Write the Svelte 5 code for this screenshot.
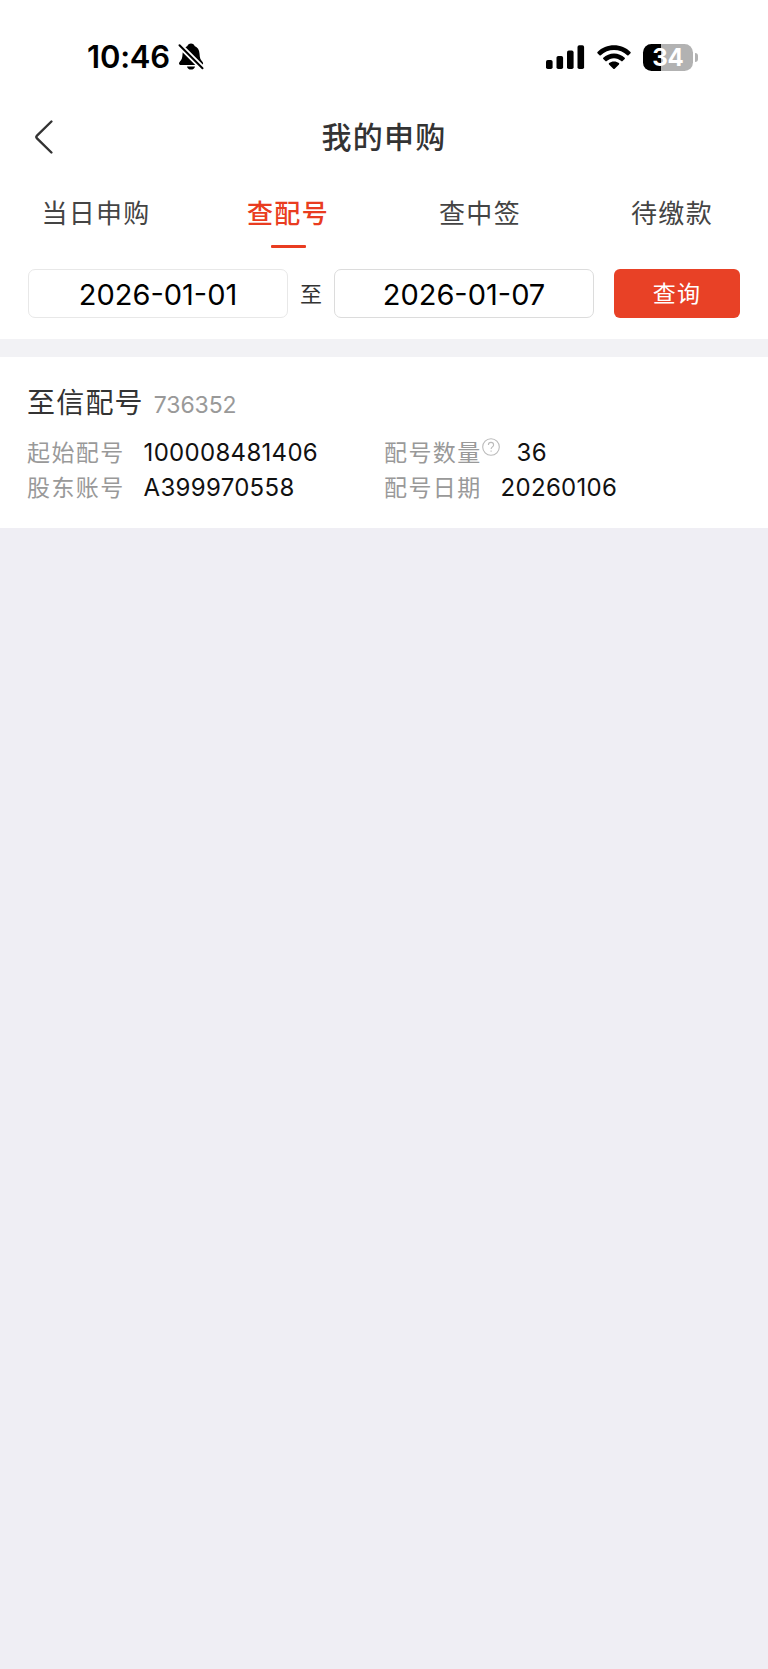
<script>
  const tabs = ['当日申购', '查配号', '查中签', '待缴款'];
  let activeTab = $state(1);
  let startDate = $state('2026-01-01');
  let endDate = $state('2026-01-07');

  const record = {
    name: '至信配号',
    code: '736352',
    startNo: '100008481406',
    account: 'A399970558',
    count: '36',
    date: '20260106'
  };
</script>

<div class="page">
  <div class="status-bar">
    <div class="status-left">
      <span class="clock">10:46</span>
      <svg class="bell" width="26" height="30" viewBox="0 0 26 30">
        <path d="M13 1.500c1.900 0 3.300 1 3.600 2.600 3 1.200 4.700 3.900 4.900 7.400.2 4.300.9 6.200 2.700 8 .7.7.9 1.300.9 1.900 0 1-.7 1.500-1.900 1.500H2.900C1.700 22.900 1 22.300 1 21.400c0-.7.300-1.300 1-2 1.800-1.800 2.400-3.600 2.600-7.900C4.800 8 6.500 5.300 9.400 4.100 9.800 2.500 11.200 1.500 13 1.500z" />
        <path d="M9 24.400h8c-.3 2-1.900 3.200-4 3.200s-3.700-1.200-4-3.200z" />
        <path class="bell-gap" d="M.5 2.200 25 26.700" />
        <path class="bell-slash" d="M1.500 3.200 24.500 26.200" />
      </svg>
    </div>
    <div class="status-right">
      <svg width="39" height="25" viewBox="0 0 39 25">
        <rect x="0" y="15" width="6.600" height="9" rx="1.800" />
        <rect x="10.500" y="11" width="6.600" height="13" rx="1.800" />
        <rect x="21" y="5.600" width="6.600" height="18.400" rx="1.800" />
        <rect x="31.500" y="0.300" width="6.600" height="23.700" rx="1.800" />
      </svg>
      <svg class="wifi" width="34" height="25" viewBox="0 0 34 25">
        <path d="M17 .3c6.300 0 12.200 2.400 16.500 6.700.4.400.4.900 0 1.300l-2 2c-.4.400-.9.400-1.300 0C26.600 6.900 22 5 17 5S7.400 6.900 3.800 10.300c-.4.400-.9.400-1.300 0l-2-2c-.4-.4-.4-.9 0-1.300C4.800 2.700 10.700.3 17 .3z" />
        <path d="M17 8.400c4.100 0 7.900 1.600 10.700 4.300.4.400.4.900 0 1.300l-2.100 2.100c-.4.400-.9.400-1.300 0-2-1.900-4.600-2.900-7.300-2.900s-5.300 1-7.300 2.900c-.4.400-.9.400-1.300 0L6.300 14c-.4-.4-.4-.9 0-1.300C9.100 10 12.900 8.400 17 8.400z" />
        <path d="M17 16.400c1.900 0 3.600.6 4.900 1.700.5.400.5.900.1 1.300l-4.300 4.300c-.4.400-1 .4-1.400 0L12 19.400c-.4-.4-.4-.9.1-1.300 1.300-1.100 3-1.700 4.900-1.700z" />
      </svg>
      <div class="battery">
        <div class="battery-body"><span>34</span></div>
        <i class="battery-cap"></i>
      </div>
    </div>
  </div>

  <header class="nav">
    <button class="back" aria-label="返回">
      <svg width="18" height="34" viewBox="0 0 18 34">
        <path d="M16.400 1.500 2 15.600a2 2 0 0 0 0 2.800L16.400 32.500" />
      </svg>
    </button>
    <h1>我的申购</h1>
  </header>

  <nav class="tabs">
    {#each tabs as tab, i}
      <button class="tab" class:active={i === activeTab} onclick={() => (activeTab = i)}>
        <span>{tab}</span>
      </button>
    {/each}
  </nav>

  <div class="filter">
    <div class="date">{startDate}</div>
    <span class="to">至</span>
    <div class="date end">{endDate}</div>
    <button class="query">查询</button>
  </div>

  <section class="card">
    <div class="card-title">
      <h2>{record.name}</h2>
      <span class="code">{record.code}</span>
    </div>
    <div class="fields">
      <div class="field">
        <span class="label">起始配号</span>
        <span class="value">{record.startNo}</span>
      </div>
      <div class="field">
        <span class="label">配号数量</span>
        <svg class="help" width="18" height="18" viewBox="0 0 18 18">
          <circle cx="9" cy="9" r="8.300" />
          <path d="M6.400 7.100c0-1.600 1.100-2.700 2.600-2.700s2.600 1 2.600 2.500c0 1.900-2.500 2.100-2.500 4.100M9.100 12.400v1.300" />
        </svg>
        <span class="value">{record.count}</span>
      </div>
      <div class="field">
        <span class="label">股东账号</span>
        <span class="value">{record.account}</span>
      </div>
      <div class="field">
        <span class="label">配号日期</span>
        <span class="value">{record.date}</span>
      </div>
    </div>
  </section>
</div>

<style>
  :global(body) {
    margin: 0;
    background: #efeef4;
  }

  .page {
    width: 768px;
    min-height: 1669px;
    background: #efeef4;
    font-family: Inter, 'Noto Sans CJK SC', sans-serif;
    color: #333;
  }

  button {
    padding: 0;
    border: none;
    background: none;
    font-family: inherit;
    cursor: pointer;
  }

  h1,
  h2 {
    margin: 0;
  }

  svg {
    display: block;
  }

  /* Status bar */
  .status-bar {
    display: flex;
    justify-content: space-between;
    height: 100px;
    box-sizing: border-box;
    padding: 42px 71px 0 87px;
    background: #fff;
    color: #000;
  }

  .status-left,
  .status-right {
    display: flex;
    align-items: center;
    height: 30px;
  }

  .clock {
    font-size: 31px;
    font-weight: 600;
    line-height: 32px;
    letter-spacing: -0.2px;
  }

  .bell {
    margin-left: 8px;
  }

  .bell-gap,
  .bell-slash {
    fill: none;
    stroke: #fff;
    stroke-width: 5.6;
  }

  .bell-slash {
    stroke: #000;
    stroke-width: 2;
    stroke-linecap: round;
  }

  .wifi {
    margin: 0 12px;
  }

  .battery {
    display: flex;
    align-items: center;
    margin-right: -1px;
  }

  .battery-body {
    width: 50px;
    height: 27px;
    border-radius: 8.5px;
    background: linear-gradient(to right, #000 17.5px, #b2b2b2 17.5px);
    color: #fff;
    font-size: 24px;
    font-weight: 700;
    line-height: 27px;
    text-align: center;
  }

  .battery-cap {
    width: 3px;
    height: 9px;
    margin-left: 2px;
    border-radius: 0 4px 4px 0;
    background: #b2b2b2;
  }

  /* Header */
  .nav {
    display: grid;
    grid-template-columns: 100px 1fr 100px;
    align-items: center;
    height: 74px;
    background: #fff;
  }

  .back {
    padding-left: 35px;
  }

  .back path {
    fill: none;
    stroke: #333;
    stroke-width: 2.4;
    stroke-linecap: round;
  }

  h1 {
    font-size: 30px;
    font-weight: 500;
    line-height: 40px;
    letter-spacing: 1.3px;
    text-align: center;
  }

  /* Tabs */
  .tabs {
    display: grid;
    grid-template-columns: repeat(4, 1fr);
    height: 75px;
    background: #fff;
  }

  .tab {
    display: flex;
    flex-direction: column;
    align-items: center;
    padding-top: 20px;
    color: #444;
    font-size: 26px;
    line-height: 40px;
    letter-spacing: 1.3px;
  }

  .tab.active {
    color: #e93c20;
    font-weight: 500;
  }

  .tab.active::after {
    content: '';
    width: 35px;
    height: 3px;
    margin-top: 11px;
    border-radius: 1px;
    background: #e93c20;
  }

  /* Date filter */
  .filter {
    display: flex;
    height: 90px;
    box-sizing: border-box;
    padding: 20px 28px 0;
    background: #fff;
  }

  .date {
    width: 260px;
    height: 49px;
    box-sizing: border-box;
    border: 1.5px solid #e8e8e8;
    border-radius: 7px;
    color: #000;
    font-size: 29px;
    line-height: 50px;
    text-align: center;
  }

  .date.end {
    border-color: #dcdcdc;
  }

  .to {
    width: 46px;
    font-size: 22px;
    line-height: 51px;
    text-align: center;
  }

  .query {
    width: 126px;
    height: 49px;
    margin-left: 20px;
    padding-top: 2px;
    border-radius: 6px;
    background: #e84126;
    color: #fff;
    font-size: 23px;
    line-height: 47px;
    letter-spacing: 1.3px;
  }

  /* Allotment record */
  .card {
    height: 189px;
    box-sizing: border-box;
    padding: 29px 27px 0;
    border-top: 18px solid #f2f2f5;
    background: #fff;
  }

  .card-title {
    display: flex;
    align-items: baseline;
    height: 50px;
  }

  h2 {
    font-size: 28px;
    font-weight: 400;
    line-height: 34px;
    letter-spacing: 1.2px;
  }

  .code {
    margin-left: 10px;
    color: #999;
    font-size: 23px;
    letter-spacing: -0.1px;
  }

  .fields {
    display: grid;
    grid-template-columns: 357px 357px;
    grid-auto-rows: 34.5px;
  }

  .field {
    display: flex;
    line-height: 34px;
  }

  .label {
    color: #999;
    font-size: 23px;
    letter-spacing: 1.4px;
  }

  .value {
    margin-left: 19px;
    color: #111;
    font-size: 24px;
    letter-spacing: 0.3px;
  }

  .help {
    margin-top: 2px;
    fill: none;
    stroke: #bbb;
    stroke-width: 1.1;
  }

  .help + .value {
    margin-left: 17px;
  }
</style>
